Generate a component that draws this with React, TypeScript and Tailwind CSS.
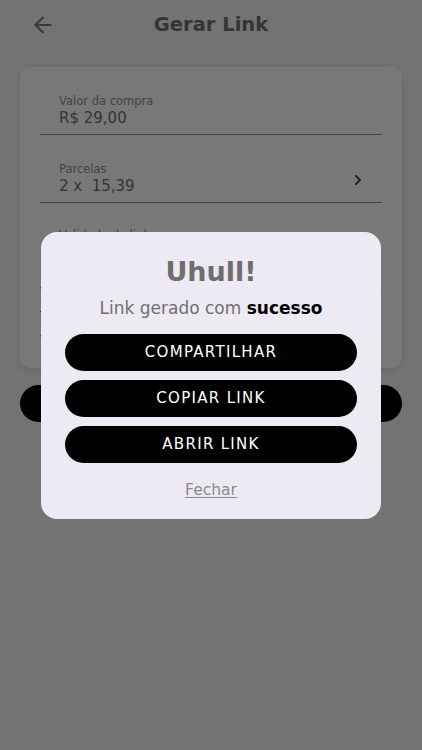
import { ArrowLeft, ChevronRight } from "lucide-react";

const FONT = { fontFamily: '"DejaVu Sans", "Noto Sans", sans-serif' };

function Field({ label, value, chevron }: { label: string; value: string; chevron?: boolean }) {
  return (
    <div className="flex items-center justify-between border-b border-[#8c8c8c] pl-[19px] pr-[16px] pt-[27px] pb-[5px]">
      <div className="flex flex-col">
        <span className="text-[11.5px] leading-[14px] text-[#8f8f8f]">{label}</span>
        <span className="whitespace-pre text-[15px] leading-[21px] text-[#6f6f6f]">{value}</span>
      </div>
      {chevron && <ChevronRight className="h-[16px] w-[16px] text-[#4a4a4a]" strokeWidth={3} />}
    </div>
  );
}

function SummaryRow({ label, value, red }: { label: string; value: string; red?: boolean }) {
  return (
    <div className="flex justify-between text-[13px] leading-[24px] text-[#5a5a5a]">
      <span>{label}</span>
      <span className={red ? "text-[#e05a5a]" : ""}>{value}</span>
    </div>
  );
}

export default function App() {
  return (
    <div className="relative h-[750px] w-[422px] overflow-hidden bg-[#f5f5f5]" style={FONT}>
      <header className="flex h-[50px] items-center px-[30px]">
        <ArrowLeft className="h-[26px] w-[26px] text-[#7a7a7a]" strokeWidth={2} />
        <h1 className="flex-1 pr-[26px] text-center text-[19.5px] font-bold text-[#707070]">Gerar Link</h1>
      </header>

      <div className="mx-[20px] mt-[17px] rounded-[10px] bg-white px-[20px] pb-[16px] shadow-[0_2px_8px_rgba(0,0,0,0.12)]">
        <Field label="Valor da compra" value="R$ 29,00" />
        <Field label="Parcelas" value="2 x  15,39" chevron />
        <div className="pl-[19px] pt-[24px] text-[11.5px] text-[#8f8f8f]">Validade do link</div>
        <div className="mt-[36px] flex flex-col">
          <SummaryRow label="Valor da parcela" value="R$ 15,39" />
          <SummaryRow label="Taxa" value="- R$ 1,78" red />
          <SummaryRow label="Valor a receber" value="R$ 27,22" />
        </div>
      </div>

      <button className="mx-[20px] mt-[17px] h-[37px] w-[382px] rounded-full bg-black text-[15px] text-white">
        GERAR LINK
      </button>

      <div className="absolute inset-0 flex items-center justify-center bg-black/[0.53]">
        <div className="flex w-[340px] flex-col items-center rounded-[16px] bg-[#edeaf4] px-[24px] pt-[24px] pb-[19px]">
          <h2 className="text-[27px] font-bold leading-[32px] text-[#6e6e6e]">Uhull!</h2>
          <p className="mt-[8px] text-[17px] leading-[24px] text-[#707070]">
            Link gerado com <span className="font-bold text-black">sucesso</span>
          </p>
          <div className="mt-[14px] flex w-full flex-col gap-[9px]">
            {["COMPARTILHAR", "COPIAR LINK", "ABRIR LINK"].map((t) => (
              <button
                key={t}
                className="h-[37px] w-full rounded-full bg-black text-[15px] tracking-[1.3px] text-white"
              >
                {t}
              </button>
            ))}
          </div>
          <button className="mt-[17px] text-[15.5px] leading-[20px] text-[#8a8a8a] underline underline-offset-2">
            Fechar
          </button>
        </div>
      </div>
    </div>
  );
}
